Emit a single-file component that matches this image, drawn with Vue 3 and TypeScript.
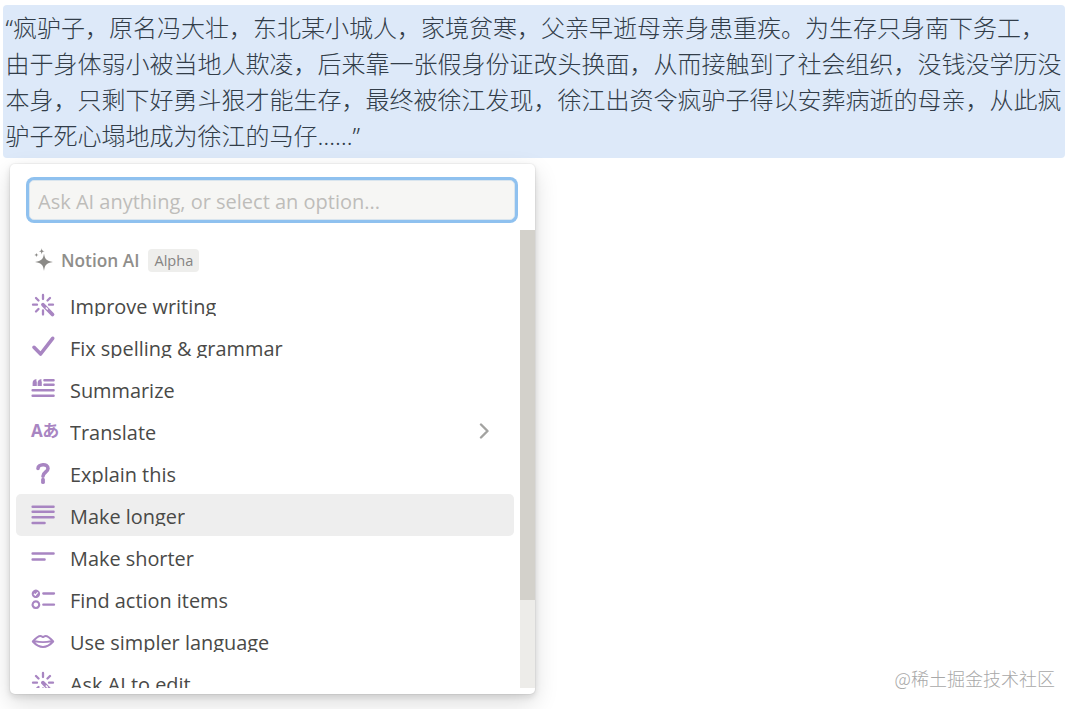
<script setup lang="ts">
interface Shape { d: string; w?: number; fill?: boolean; light?: boolean }
interface Item { label: string; icon: Shape[] | null; chevron?: boolean; active?: boolean }

const wand: Shape[] = [
  { d: 'M11 1V5M11 16.5V20.5M1 10.7H5M17 10.7H21M4 4L6.5 6.5M18 4L15.5 6.5M4 17.5L6.5 15', w: 2.3 },
  { d: 'M11 10.7L20.5 20.5', w: 3.8 },
  { d: 'M13.8 13.5L15.8 15.6', w: 1.4, light: true },
]

const items: Item[] = [
  { label: 'Improve writing', icon: wand },
  { label: 'Fix spelling & grammar', icon: [{ d: 'M2 11.3L8.6 18L20.7 2.3', w: 3.6 }] },
  {
    label: 'Summarize',
    icon: [
      { d: 'M0.6 8V5C0.6 2.8 2 1.4 4.4 1V3.4H4.8V8ZM5.6 8V5C5.6 2.8 7 1.4 9.4 1V3.4H9.8V8Z', fill: true },
      { d: 'M12.4 2.3H21.6M12.4 6.7H21.6M0.6 12.3H21.6M0.6 17.7H21.6', w: 2.4 },
    ],
  },
  { label: 'Translate', icon: null, chevron: true },
  {
    label: 'Explain this',
    icon: [
      { d: 'M6 6.5C6 2 16 1 16 6.5C16 10 11 10 11 14.2', w: 3.6 },
      { d: 'M11 17.6V20.2', w: 3.8 },
    ],
  },
  { label: 'Make longer', icon: [{ d: 'M0.6 2.7H21.6M0.6 7.7H21.6M0.6 13.3H21.6M0.6 19H12.6', w: 2.4 }], active: true },
  { label: 'Make shorter', icon: [{ d: 'M0.6 7.5H21.6M0.6 13.5H12.6', w: 2.4 }] },
  {
    label: 'Find action items',
    icon: [
      { d: 'M3.9 1.6A4.2 4.2 0 1 1 3.89 1.6Z', fill: true },
      { d: 'M2 5.8L3.4 7.2L5.8 4.4', w: 1.3, light: true },
      { d: 'M3.9 13.4A3.3 3.3 0 1 1 3.89 13.4Z', w: 2.1 },
      { d: 'M11.3 5.5H22M11.3 16.7H22', w: 2.3 },
    ],
  },
  {
    label: 'Use simpler language',
    icon: [
      { d: 'M0.8 11.5C3 9 6 6 8.5 6C9.5 6 10.5 7 11 7C11.5 7 12.5 6 13.5 6C16 6 19 9 21.2 11.5C18 15 15 17 11 17C7 17 4 15 0.8 11.5ZM3 11.3C7 12.3 15 12.3 19 11.3', w: 2 },
    ],
  },
  { label: 'Ask AI to edit', icon: wand },
]
</script>

<template>
  <main class="page">
    <p class="quote">“疯驴子，原名冯大壮，东北某小城人，家境贫寒，父亲早逝母亲身患重疾。为生存只身南下务工，由于身体弱小被当地人欺凌，后来靠一张假身份证改头换面，从而接触到了社会组织，没钱没学历没本身，只剩下好勇斗狠才能生存，最终被徐江发现，徐江出资令疯驴子得以安葬病逝的母亲，从此疯驴子死心塌地成为徐江的马仔……”</p>

    <section class="panel">
      <div class="search">
        <input class="search-input" type="text" placeholder="Ask AI anything, or select an option..." />
      </div>
      <div class="body">
        <div class="list">
          <div class="heading">
            <svg class="sparkle" viewBox="0 0 22 24" width="22" height="24">
              <path d="M12 5.5C12.8 11 14.2 12.7 21 14C14.2 15.3 12.8 17 12 23C11.2 17 9.8 15.3 3 14C9.8 12.7 11.2 11 12 5.5Z" />
              <path d="M9.7 0C10 2.6 10.5 3 13 3.3C10.5 3.7 10 4.1 9.7 6.6C9.4 4.1 8.9 3.7 6.6 3.3C8.9 3 9.4 2.6 9.7 0Z" />
              <path d="M4.4 4.8C4.7 6.4 5 6.7 6.6 7C5 7.3 4.7 7.6 4.4 9.2C4.1 7.6 3.8 7.3 2.2 7C3.8 6.7 4.1 6.4 4.4 4.8Z" />
            </svg>
            <span class="heading-name">Notion AI</span>
            <span class="badge">Alpha</span>
          </div>
          <div v-for="item in items" :key="item.label" class="row" :class="{ active: item.active }">
            <svg v-if="item.icon" class="icon" viewBox="0 0 22 22" width="22" height="22">
              <path
                v-for="(shape, i) in item.icon"
                :key="i"
                :d="shape.d"
                :class="{ solid: shape.fill, light: shape.light }"
                :stroke-width="shape.w"
              />
            </svg>
            <span v-else class="glyph">Aあ</span>
            <span class="label">{{ item.label }}</span>
            <svg v-if="item.chevron" class="chevron" viewBox="0 0 10 16" width="10" height="16">
              <path d="M2 1.5L8.5 8L2 14.5" />
            </svg>
          </div>
        </div>
        <div class="scrollbar"><div class="thumb"></div></div>
      </div>
    </section>

    <span class="watermark">@稀土掘金技术社区</span>
  </main>
</template>

<style scoped>
.page {
  position: relative;
  box-sizing: border-box;
  width: 1075px;
  height: 709px;
  padding: 5px 10px 0 3px;
  overflow: hidden;
  background: #fff;
  font-family: "Open Sans", "Noto Sans", "Noto Sans CJK SC", sans-serif;
}
.quote {
  margin: 0;
  box-sizing: border-box;
  height: 153px;
  padding: 5px 3px 0 2.5px;
  border-radius: 4px;
  background: #dde9f9;
  color: #323d49;
  font-family: "Noto Sans", "Noto Sans CJK SC", sans-serif;
  font-size: 24px;
  font-weight: 300;
  line-height: 36px;
}
.panel {
  display: flex;
  flex-direction: column;
  box-sizing: border-box;
  width: 525px;
  height: 530px;
  margin: 6px 0 0 7px;
  padding-bottom: 6px;
  border-radius: 5px;
  overflow: hidden;
  background: #fff;
  box-shadow: 0 0 0 1px rgba(15, 15, 15, 0.04), 0 3px 6px rgba(15, 15, 15, 0.12), 0 9px 24px rgba(15, 15, 15, 0.14);
}
.search {
  flex: none;
  box-sizing: border-box;
  height: 66px;
  padding: 16px 0 0 19px;
}
.search-input {
  display: block;
  box-sizing: border-box;
  width: 486px;
  height: 40px;
  padding: 2px 8px 0;
  border: 1px solid #d9e5ee;
  border-radius: 5px;
  outline: none;
  background: #f6f6f4;
  box-shadow: 0 0 0 3px #8fc1ef;
  font: 400 20px "Open Sans", "Noto Sans", sans-serif;
  color: #4a4a48;
}
.search-input::placeholder {
  color: #bebdba;
  opacity: 1;
}
.body {
  flex: 1;
  display: flex;
  min-height: 0;
}
.list {
  flex: 1;
  min-width: 0;
  overflow: hidden;
}
.heading {
  display: flex;
  align-items: center;
  box-sizing: border-box;
  height: 54px;
  padding: 8px 0 2px 22px;
  color: #8f8e8b;
}
.sparkle {
  flex: none;
  fill: #8b8a87;
}
.heading-name {
  margin-left: 7px;
  font-size: 17.3px;
  font-weight: 600;
}
.badge {
  margin-left: 9px;
  padding: 0 6px;
  border-radius: 4px;
  background: #eeeeec;
  color: #858482;
  font-size: 14.6px;
  font-weight: 500;
  line-height: 23px;
}
.row {
  display: flex;
  align-items: center;
  box-sizing: border-box;
  height: 42px;
  margin: 0 6px;
  padding-left: 16px;
  border-radius: 5px;
  color: #494947;
}
.row.active {
  background: #eeeeee;
}
.icon {
  flex: none;
  overflow: visible;
  fill: none;
  stroke: #a885c2;
  stroke-linecap: round;
  stroke-linejoin: round;
}
.icon .solid {
  fill: #a885c2;
  stroke: none;
}
.icon .light {
  stroke: #fff;
  stroke-linecap: butt;
}
.glyph {
  flex: none;
  width: 24px;
  margin: -1px -1px 0 -1px;
  color: #a885c2;
  font-size: 17px;
  font-weight: 700;
  line-height: 22px;
  white-space: nowrap;
  letter-spacing: -0.5px;
}
.label {
  display: block;
  height: 22px;
  margin-left: 16px;
  overflow: hidden;
  font-size: 19.9px;
  line-height: 26px;
  white-space: nowrap;
}
.chevron {
  flex: none;
  margin-left: auto;
  margin-right: 25px;
  fill: none;
  stroke: #a3a3a1;
  stroke-width: 2.4;
  stroke-linecap: round;
  stroke-linejoin: round;
}
.scrollbar {
  flex: none;
  width: 15px;
  background: #edece9;
}
.thumb {
  height: 370px;
  background: #d3d1cb;
}
.watermark {
  position: absolute;
  right: 20px;
  top: 667px;
  color: #a8a8a8;
  font-family: "Noto Sans CJK SC", sans-serif;
  font-size: 18px;
  font-weight: 300;
  line-height: 22px;
}
</style>
